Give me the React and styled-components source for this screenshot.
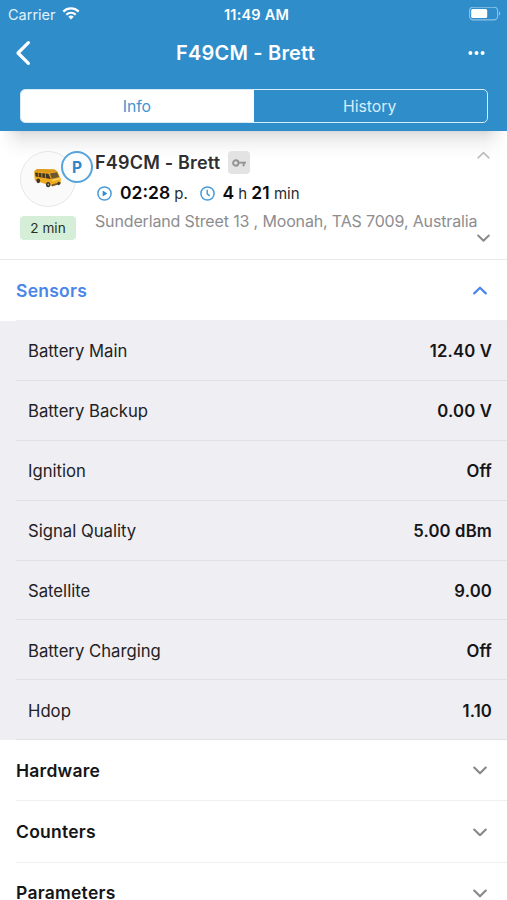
import { useState } from 'react'
import styled, { createGlobalStyle } from 'styled-components'

const GlobalStyle = createGlobalStyle`
    * { box-sizing: border-box; }

    body {
        margin: 0;
        background: #fff;
        font-family: Inter, 'Liberation Sans', sans-serif;
        color: #151517;
        overflow: hidden;
    }

    button {
        font: inherit;
        color: inherit;
        background: none;
        border: 0;
        padding: 0;
        cursor: pointer;
    }

    svg { display: block; flex: none; }
`

const Screen = styled.div`
    width: 507px;
    height: 900px;
    overflow: hidden;
    display: flex;
    flex-direction: column;
    background: #fff;
`

const Header = styled.header`
    flex: none;
    height: 131px;
    background: #2f8dca;
    color: #fff;
    display: flex;
    flex-direction: column;
`

const StatusBar = styled.div`
    height: 28px;
    padding: 0 6px 0 8px;
    display: grid;
    grid-template-columns: 1fr auto 1fr;
    align-items: center;
    font-size: 14.5px;
`

const Carrier = styled.div`
    display: flex;
    align-items: center;
    gap: 6px;
    color: #e3f1fa;
`

const Clock = styled.div`
    margin-left: 4px;
    font-weight: 600;
    font-size: 14.5px;
    letter-spacing: 0.2px;
`

const BatterySlot = styled.div`
    display: flex;
    justify-content: flex-end;
`

const NavBar = styled.div`
    height: 50px;
    padding: 0 22px 0 15px;
    display: grid;
    grid-template-columns: 1fr auto 1fr;
    align-items: center;
`

const Title = styled.h1`
    margin: 0 9px 0 0;
    font-size: 20px;
    font-weight: 600;
    line-height: 24px;
    letter-spacing: 0.2px;
`

const NavButton = styled.button`
    justify-self: ${props => props.$end ? 'end' : 'start'};
`

const Segments = styled.div`
    height: 34px;
    margin: 11px 19.5px 0 20px;
    display: flex;
    border: 1.5px solid #d8ecf8;
    border-radius: 5px;
    overflow: hidden;
`

const Segment = styled.button`
    flex: 1;
    font-size: 15.8px;
    line-height: 20px;
    padding: 1px 1px 0 0;
    color: ${props => props.$active ? '#4095cf' : '#d8ecf8'};
    background: ${props => props.$active ? '#fff' : 'transparent'};
`

const Summary = styled.section`
    flex: none;
    height: 129px;
    padding: 20px 16.5px 0 20px;
    display: flex;
    border-bottom: 1px solid #e9e9eb;
    background:
        linear-gradient(to right, #fff 0, rgba(255, 255, 255, 0) 22px, rgba(255, 255, 255, 0) 485px, #fff 507px),
        linear-gradient(#d8d8da 0, #e6e6e7 4px, #f2f2f3 11px, #fbfbfb 20px, #fff 28px);
`

const VehicleColumn = styled.div`
    width: 75px;
    flex: none;
`

const Avatar = styled.div`
    position: relative;
    width: 56px;
    height: 56px;
    border: 1px solid #e6e6e8;
    border-radius: 50%;
    background: #fafafa;
    display: flex;
    align-items: center;
    justify-content: center;
    padding-right: 2px;
    padding-bottom: 2px;
`

const ParkedBadge = styled.div`
    position: absolute;
    top: -1px;
    left: 40px;
    width: 32px;
    height: 32px;
    border: 2px solid #58a3da;
    border-radius: 50%;
    background: #fbfdfe;
    color: #2f86c9;
    font-size: 15.5px;
    font-weight: 700;
    display: flex;
    align-items: center;
    justify-content: center;
`

const Age = styled.div`
    margin-top: 9px;
    width: 56px;
    height: 24px;
    border-radius: 4px;
    background: #d5eed7;
    color: #253027;
    font-size: 13.6px;
    line-height: 24px;
    text-align: center;
`

const Details = styled.div`
    flex: 1;
    min-width: 0;
    white-space: nowrap;
`

const NameRow = styled.div`
    height: 23px;
    display: flex;
    align-items: center;
    gap: 8px;
`

const Name = styled.h2`
    margin: 0;
    font-size: 18px;
    font-weight: 600;
    letter-spacing: 0.2px;
    color: #2f2f31;
`

const KeyTag = styled.div`
    width: 22px;
    height: 23px;
    border-radius: 4px;
    background: #e3e3e4;
    display: flex;
    align-items: center;
    justify-content: center;
`

const Times = styled.div`
    height: 24px;
    margin-top: 7px;
    padding-left: 2px;
    display: flex;
    align-items: center;
`

const Duration = styled.div`
    margin: 0 12px 0 8px;
    font-size: 15px;
    line-height: 24px;
    color: #2b2b2d;

    &:last-child { margin-left: 7.5px; }

    b {
        font-size: 17.5px;
        font-weight: 600;
        color: #0c0c0e;
    }
`

const Address = styled.div`
    margin-top: 6px;
    font-size: 16px;
    line-height: 20px;
    letter-spacing: -0.15px;
    color: #8d8d8f;
`

const Pager = styled.div`
    width: 14px;
    height: 91px;
    flex: none;
    display: flex;
    flex-direction: column;
    justify-content: space-between;
    align-items: center;
    margin-left: -14px;
`

const SectionHead = styled.button`
    flex: none;
    width: 491px;
    height: ${props => props.$open ? '61px' : '61.2px'};
    margin-left: 16px;
    padding: 1px 20px 0 0;
    display: flex;
    align-items: center;
    justify-content: space-between;
    border-bottom: 1px solid ${props => props.$open ? '#eeeef2' : '#efeff1'};
    font-size: 17.5px;
    font-weight: 600;
    line-height: 14px;
    letter-spacing: 0.25px;
    color: ${props => props.$open ? '#4a86ea' : '#151517'};

    svg { color: ${props => props.$open ? '#4a86ea' : '#8a8a8c'}; }
`

const SensorList = styled.div`
    flex: none;
    padding-left: 16px;
    background: #efeef3;
`

const SensorRow = styled.div`
    height: 59.9px;
    padding: 2px 15px 0 12px;
    display: flex;
    align-items: center;
    justify-content: space-between;
    border-bottom: 1px solid #e0e0e5;
    font-size: 16.7px;
    color: #222224;
`

const SensorValue = styled.span`
    font-weight: 600;
    letter-spacing: 0.15px;
    color: #151517;
`

const sensors = [
    ['Battery Main', '12.40 V'],
    ['Battery Backup', '0.00 V'],
    ['Ignition', 'Off'],
    ['Signal Quality', '5.00 dBm'],
    ['Satellite', '9.00'],
    ['Battery Charging', 'Off'],
    ['Hdop', '1.10'],
]

function Chevron({ up, width = 14, stroke = 2.2, color = 'currentColor' }) {
    return (
        <svg width={width} height={width * 0.64} viewBox='0 0 14 9' fill='none' stroke={color} strokeWidth={stroke} strokeLinecap='round' strokeLinejoin='round'>
            <path d={up ? 'M1.2 7.4 7 1.7l5.8 5.7' : 'M1.2 1.6 7 7.3l5.8-5.7'} />
        </svg>
    )
}

function Wifi() {
    return (
        <svg width='18' height='14' viewBox='0 0 18 14' fill='none' stroke='#fff' strokeWidth='2.2'>
            <path d='M1.3 4.6a11 11 0 0 1 15.4 0' />
            <path d='M4.3 7.7a6.7 6.7 0 0 1 9.4 0' />
            <path d='M9 12.5 6.3 9.8a3.9 3.9 0 0 1 5.4 0Z' fill='#fff' stroke='none' />
        </svg>
    )
}

function Battery() {
    return (
        <svg width='32' height='14' viewBox='0 0 32 14'>
            <rect x='.6' y='.1' width='28' height='12.8' rx='3.6' fill='none' stroke='#8fc2e5' strokeWidth='1.1' />
            <rect x='2.2' y='1.9' width='16' height='9.2' rx='1.6' fill='#fff' />
            <path d='M30 4.3c1.7.8 1.7 3.6 0 4.4Z' fill='#8fc2e5' />
        </svg>
    )
}

function Van() {
    return (
        <svg width='29' height='20' viewBox='0 0 30 21'>
            <path d='M1 3.4 4.2 1l18.2.5 3 2.2 2.6 5.8 1 2-.4 4.6-9.4 2.9L1.6 13Z' fill='#efab20' />
            <path d='M1 3.4 4.2 1l18.2.5 3 2.2-8.6 1.4Z' fill='#d99a1d' />
            <path d='m2 4.6 14 1.5 2.5 5.4L2.5 8.8Z' fill='#42351f' />
            <path d='m17.4 5.9 7.7-1.4 2.2 5-7.8 1.8Z' fill='#6a5630' />
            <path d='M5.4 4.9v4.3M9 5.3v4.5M12.8 5.7v4.7' stroke='#e5a01c' strokeWidth='.9' />
            <path d='m20 13.1 8.6-2' stroke='#f8d35c' strokeWidth='1.6' />
            <path d='m19.4 17.2 9.4-2.4v1.7l-9.2 2.9Z' fill='#75592a' />
            <ellipse cx='5.3' cy='13.4' rx='2' ry='2.5' fill='#393631' />
            <ellipse cx='15.7' cy='17.4' rx='2.3' ry='2.8' fill='#393631' />
            <ellipse cx='15.9' cy='17.4' rx='.9' ry='1.2' fill='#a9a59b' />
            <ellipse cx='26.8' cy='16.3' rx='1.3' ry='1.8' fill='#393631' />
        </svg>
    )
}

function Key() {
    return (
        <svg width='14' height='8' viewBox='0 0 14 8' fill='none' stroke='#929294' strokeWidth='1.9'>
            <circle cx='3.8' cy='4' r='2.7' />
            <path d='M6.5 3.6H14M11.6 3.6v3.6' />
        </svg>
    )
}

function RoundIcon({ play }) {
    return (
        <svg width='15' height='15' viewBox='0 0 15 15' fill='none' stroke='#4a9bd9' strokeWidth='1.5'>
            <circle cx='7.5' cy='7.5' r='6.6' />
            {play
                ? <path d='M5.7 4.4v6.2l4.6-3.1Z' fill='#2f8bd2' stroke='none' />
                : <path d='M7.2 3.8v4l2.5 2' />}
        </svg>
    )
}

export default function App() {
    const [tab, setTab] = useState('Info')

    return (
        <Screen>
            <GlobalStyle />
            <Header>
                <StatusBar>
                    <Carrier>Carrier <Wifi /></Carrier>
                    <Clock>11:49 AM</Clock>
                    <BatterySlot><Battery /></BatterySlot>
                </StatusBar>
                <NavBar>
                    <NavButton aria-label='Back'>
                        <svg width='17' height='26' viewBox='0 0 17 26' fill='none' stroke='#fff' strokeWidth='3.2' strokeLinecap='round' strokeLinejoin='round'>
                            <path d='M13.4 2.6 3 13l10.4 10.4' />
                        </svg>
                    </NavButton>
                    <Title>F49CM - Brett</Title>
                    <NavButton $end aria-label='More'>
                        <svg width='17' height='5' viewBox='0 0 17 5' fill='#fff'>
                            <circle cx='2.4' cy='2' r='2' />
                            <circle cx='8.5' cy='2' r='2' />
                            <circle cx='14.6' cy='2' r='2' />
                        </svg>
                    </NavButton>
                </NavBar>
                <Segments>
                    {['Info', 'History'].map(name => (
                        <Segment key={name} $active={tab == name} onClick={() => setTab(name)}>{name}</Segment>
                    ))}
                </Segments>
            </Header>

            <Summary>
                <VehicleColumn>
                    <Avatar>
                        <Van />
                        <ParkedBadge>P</ParkedBadge>
                    </Avatar>
                    <Age>2 min</Age>
                </VehicleColumn>
                <Details>
                    <NameRow>
                        <Name>F49CM - Brett</Name>
                        <KeyTag><Key /></KeyTag>
                    </NameRow>
                    <Times>
                        <RoundIcon play />
                        <Duration><b>02:28</b> p.</Duration>
                        <RoundIcon />
                        <Duration><b>4</b> h <b>21</b> min</Duration>
                    </Times>
                    <Address>Sunderland Street 13 , Moonah, TAS 7009, Australia</Address>
                </Details>
                <Pager>
                    <Chevron up width={13} stroke={1.7} color='#bcbcbe' />
                    <Chevron width={13} stroke={2.1} color='#8a8a8c' />
                </Pager>
            </Summary>

            <SectionHead $open>Sensors <Chevron up /></SectionHead>
            <SensorList>
                {sensors.map(([label, value]) => (
                    <SensorRow key={label}>
                        {label}
                        <SensorValue>{value}</SensorValue>
                    </SensorRow>
                ))}
            </SensorList>
            {['Hardware', 'Counters', 'Parameters'].map(name => (
                <SectionHead key={name}>{name} <Chevron /></SectionHead>
            ))}
        </Screen>
    )
}
